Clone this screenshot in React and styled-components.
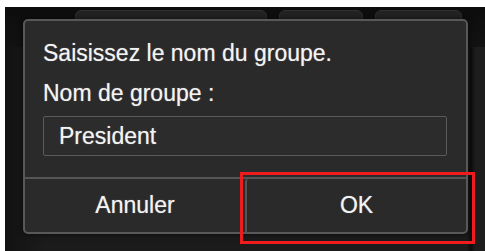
import React from "react";
import styled, { createGlobalStyle } from "styled-components";

const Global = createGlobalStyle`
  html, body { margin: 0; padding: 0; background: #ffffff; }
  body { font-family: "Liberation Sans", Arial, sans-serif; }
`;

const Page = styled.div`
  width: 485px;
  height: 251px;
  padding: 7px 0 0 5px;
  box-sizing: border-box;
  background: #ffffff;
  overflow: hidden;
`;

const Screen = styled.div`
  position: relative;
  width: 480px;
  height: 244px;
  background: linear-gradient(to right, #111111 0px, #161616 17px, #1b1b1b 40px, #1b1b1b 462px, #0c0c0c 466px, #1d1d1d 470px);
  overflow: hidden;
`;

const TabRow = styled.div`
  display: flex;
  gap: 12px;
  padding: 3px 0 0 70px;
  height: 40px;
  box-sizing: border-box;
  background: linear-gradient(#0d0d0d, #121212);
`;

const BackTab = styled.div`
  width: ${(p) => p.$w}px;
  height: 40px;
  background: #232323;
  border: 1px solid #2f2f2f;
  border-radius: 6px 6px 0 0;
  box-sizing: border-box;
`;

const Dialog = styled.div`
  position: absolute;
  left: 18px;
  top: 12px;
  width: 445px;
  height: 215px;
  box-sizing: border-box;
  background: #2a2a2a;
  border: 2px solid #585858;
  border-radius: 5px;
  display: flex;
  flex-direction: column;
  box-shadow: 0 0 6px rgba(0, 0, 0, 0.6);
`;

const Body = styled.div`
  flex: 1;
  padding: 19px 19px 0 18px;
  display: flex;
  flex-direction: column;
`;

const Label = styled.div`
  font-size: 23px;
  line-height: 26px;
  color: #f3f3f3;
  margin-bottom: ${(p) => p.$mb}px;
  text-shadow: 0 0 1px rgba(255, 255, 255, 0.5);
  white-space: nowrap;
`;

const Field = styled.div`
  height: 40px;
  box-sizing: border-box;
  border: 1.5px solid #5a5a5a;
  border-radius: 2px;
  background: #2c2c2c;
  display: flex;
  align-items: center;
  padding-left: 15px;
  font-size: 23px;
  color: #f3f3f3;
  text-shadow: 0 0 1px rgba(255, 255, 255, 0.5);
`;

const Footer = styled.div`
  height: 55px;
  box-sizing: border-box;
  border-top: 2px solid #555555;
  display: grid;
  grid-template-columns: 220px 1fr;
`;

const FooterButton = styled.div`
  display: flex;
  align-items: center;
  justify-content: center;
  font-size: 23px;
  color: #f3f3f3;
  text-shadow: 0 0 1px rgba(255, 255, 255, 0.5);
  border-left: ${(p) => (p.$primary ? "2px solid #555555" : "none")};
  border-radius: ${(p) => (p.$primary ? "3px 0 3px 0" : "0")};
`;

const Highlight = styled.div`
  position: absolute;
  left: 235px;
  top: 165px;
  width: 235px;
  height: 72px;
  box-sizing: border-box;
  border: 3.5px solid #ee1c1c;
  pointer-events: none;
`;

export default function App() {
  return (
    <>
      <Global />
      <Page>
        <Screen>
          <TabRow>
            <BackTab $w={192} />
            <BackTab $w={84} />
            <BackTab $w={87} />
          </TabRow>
          <Dialog>
            <Body>
              <Label $mb={14}>Saisissez le nom du groupe.</Label>
              <Label $mb={10}>Nom de groupe :</Label>
              <Field>President</Field>
            </Body>
            <Footer>
              <FooterButton>Annuler</FooterButton>
              <FooterButton $primary>OK</FooterButton>
            </Footer>
          </Dialog>
          <Highlight />
        </Screen>
      </Page>
    </>
  );
}
